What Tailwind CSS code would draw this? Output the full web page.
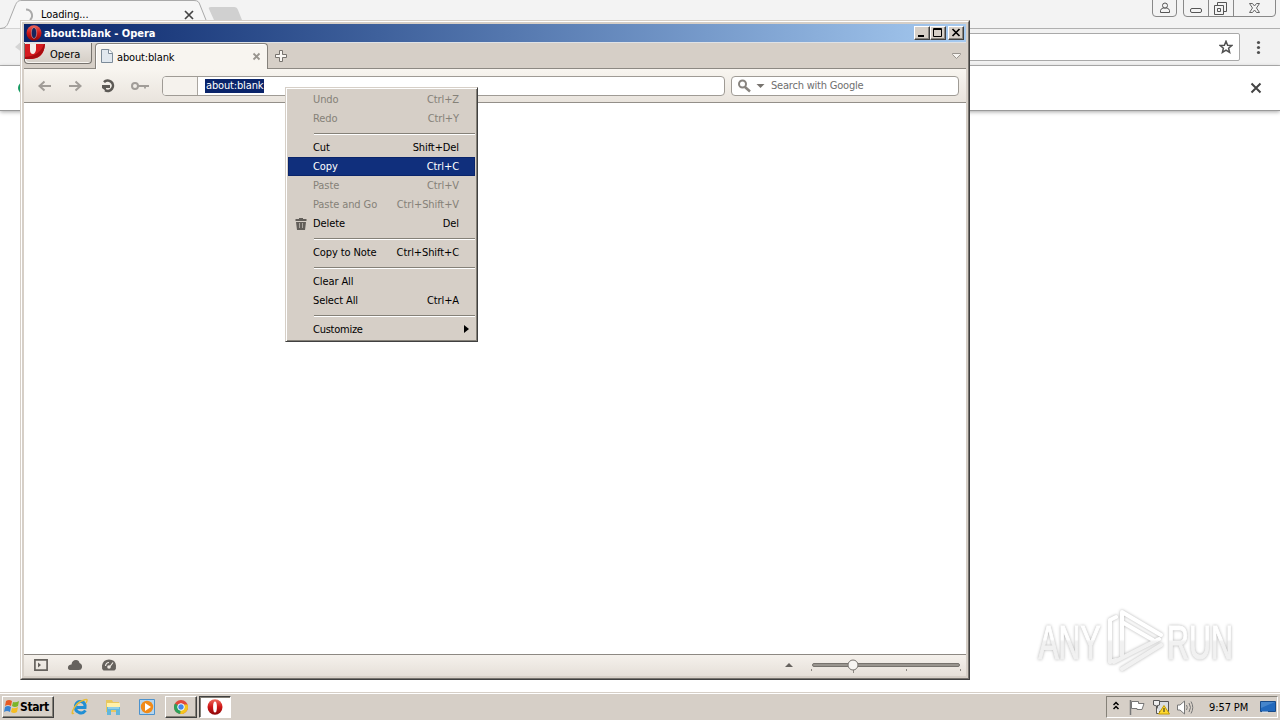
<!DOCTYPE html>
<html lang="en">
<head>
<meta charset="utf-8">
<title>Desktop</title>
<script src="https://cdn.jsdelivr.net/npm/@tailwindcss/browser@4"></script>
</head>
<body class="relative w-[1280px] h-[720px] overflow-hidden bg-white text-black text-[11px] leading-[14px] font-['DejaVu_Sans_Condensed','DejaVu_Sans',sans-serif] [font-stretch:condensed] whitespace-nowrap">

<!-- Background browser -->
<section class="absolute inset-x-0 top-0 flex flex-col">
  <div class="relative h-[29px] bg-[#f3f3f3] border-b border-[#b0b0b0]">
    <svg class="absolute left-0 top-0" width="260" height="29" fill="none">
      <path d="M0 28.500C6 28 7 26 9 21L15 6C17 1.500 18 .5 22 .5H194C198 .5 199 2 200 5L206 20L209 28.500" fill="#f6f6f6" stroke="#a9a9a9"/>
      <path d="M211 7H234Q237 7 238 10L242 20H214L209 9Q208 7 211 7Z" fill="#d0d0d0"/>
      <path d="M26 9.500A6 6 0 0 1 30 20" stroke="#aaa" stroke-width="2"/>
      <path d="M185 11L193 19M193 11L185 19" stroke="#444" stroke-width="1.700"/>
    </svg>
    <span class="absolute left-[41px] top-[8px] tracking-[-0.1px]">Loading...</span>
    <svg class="absolute left-[1150px] top-0" width="130" height="20" fill="none" stroke="#888">
      <path d="M2.500 0V13Q2.500 16.500 6 16.500H23Q26.500 16.500 26.500 13V0" />
      <path d="M33.500 0V13Q33.500 16.500 37 16.500H122Q125.500 16.500 125.500 13V0M58.500 0V16M83.500 0V16" />
      <path d="M10.500 12.500V10.500Q11 8.500 13 8H17Q19 8.500 19.500 10.500V12.500Z" stroke="#555"/><circle cx="15" cy="5.500" r="2.500" fill="#f3f3f3" stroke="#555"/>
      <rect x="40.500" y="8.500" width="11" height="4" rx="1.500" stroke="#555"/>
      <path d="M67.500 5V2.500H76.500V11.500H74M64.500 5.500H73.500V14.500H64.500ZM67.500 8.500H70.500V11.500H67.500Z" stroke="#555"/>
      <path d="M99.500 3.500H102.500L104.500 6L106.500 3.500H109.500L106.500 8L109.500 12.500H106.500L104.500 10L102.500 12.500H99.500L102.500 8Z" stroke="#666"/>
    </svg>
  </div>
  <div class="h-[37px] bg-[#f2f2f2] border-b border-[#b4b4b4] flex items-start pt-1">
    <svg class="mt-1 ml-3" width="12" height="18"><path d="M11 3L3 10L11 16Z" fill="#d5d5d5"/></svg>
    <div class="ml-[36px] w-[1180px] h-[28px] bg-white border border-[#a9a9a9] rounded-[2px] flex justify-end items-center pr-[6px]">
      <svg width="14" height="14" viewBox="0 0 14 14" fill="none" stroke="#505050" stroke-width="1.500"><path d="M7 1.300L8.600 5.200L12.800 5.500L9.600 8.200L10.600 12.400L7 10.100L3.400 12.400L4.400 8.200L1.200 5.500L5.400 5.200Z"/></svg>
    </div>
    <svg class="ml-[16px] mt-[7px]" width="5" height="16" fill="#505050"><circle cx="2.500" cy="2.500" r="1.600"/><circle cx="2.500" cy="7.500" r="1.600"/><circle cx="2.500" cy="12.500" r="1.600"/></svg>
  </div>
  <div class="h-[45px] bg-white border-b border-[#999] shadow-[0_1px_4px_rgba(0,0,0,.35)] flex items-center justify-between">
    <i class="block ml-[18px] size-3 rounded-full bg-[#169b62]"></i>
    <svg class="mr-[18px]" width="12" height="12"><path d="M1.500 1.500L10.500 10.500M10.500 1.500L1.500 10.500" stroke="#444" stroke-width="2"/></svg>
  </div>
</section>

<!-- Watermark -->
<svg class="absolute left-[1030px] top-[600px]" width="250" height="80">
  <defs><linearGradient id="w" gradientUnits="userSpaceOnUse" x1="0" y1="20" x2="0" y2="62"><stop offset=".46" stop-color="#fff"/><stop offset=".52" stop-color="#f1f1f1"/></linearGradient></defs>
  <g style="filter:drop-shadow(0 0 1.500px rgba(0,0,0,.3))">
    <g fill="url(#w)" stroke="url(#w)" stroke-width="1.200" font-family="Liberation Sans Narrow, Liberation Sans, sans-serif" font-size="49">
      <text x="8.500" y="58.500" textLength="62" lengthAdjust="spacingAndGlyphs">ANY</text>
      <text x="137" y="58.500" textLength="66" lengthAdjust="spacingAndGlyphs">RUN</text>
    </g>
    <g fill="none" stroke="url(#w)" stroke-width="4" stroke-linejoin="round" stroke-linecap="round">
      <path d="M92 56V12L131 35M80 62V20L86 17M84 62L129 39M92 69L131 45M80 62L86 60M92 22L123 40"/>
    </g>
  </g>
</svg>

<!-- Opera window -->
<section class="absolute left-[20px] top-[20px] w-[950px] h-[660px] bg-[#d6cfc7] border border-t-[#d6cfc7] border-l-[#d6cfc7] border-r-[#404040] border-b-[#404040] flex flex-col">
 <div class="flex-1 flex flex-col border-t border-l border-t-white border-l-white border-r border-b border-r-[#77736e] border-b-[#77736e] pt-[2px] pl-[2px] pr-[2px] pb-[2px] min-h-0">
  <header class="h-[18px] shrink-0 bg-linear-to-r from-[#0a246a] to-[#a6caf0] flex items-center pl-[2px] pr-[2px] text-white font-bold">
    <svg width="16" height="16"><defs><linearGradient id="r" x2="0" y2="1"><stop stop-color="#f06a5c"/><stop offset=".5" stop-color="#ce1515"/><stop offset="1" stop-color="#8b0808"/></linearGradient></defs><ellipse cx="8" cy="8" rx="7.500" ry="7.800" fill="url(#r)"/><ellipse cx="8" cy="8" rx="2.700" ry="5.500" fill="#15245c" stroke="#f5b0a5" stroke-width=".5"/></svg>
    <span class="ml-[2px] mt-px tracking-[-0.02px]">about:blank - Opera</span>
    <div class="ml-auto flex">
      <b class="w-4 h-[14px] bg-[#d6cfc7] border border-t-white border-l-white border-r-[#404040] border-b-[#404040] shadow-[inset_-1px_-1px_#8a8680]"><svg width="14" height="12"><path d="M3 9H9" stroke="#000" stroke-width="2"/></svg></b>
      <b class="w-4 h-[14px] bg-[#d6cfc7] border border-t-white border-l-white border-r-[#404040] border-b-[#404040] shadow-[inset_-1px_-1px_#8a8680]"><svg width="14" height="12" fill="none" stroke="#000"><path d="M2.500 1.500H10.500V9.500H2.500ZM2.500 2.500H10.500"/></svg></b>
      <b class="ml-[2px] w-4 h-[14px] bg-[#d6cfc7] border border-t-white border-l-white border-r-[#404040] border-b-[#404040] shadow-[inset_-1px_-1px_#8a8680]"><svg width="14" height="12"><path d="M3.500 2L10.500 9M10.500 2L3.500 9" stroke="#000" stroke-width="1.700"/></svg></b>
    </div>
  </header>
  <nav class="h-[27px] shrink-0 bg-[#d6cfc7] flex items-start border-b border-[#8d8983] border-t border-t-[#dfe2e6]">
    <div class="w-[68px] h-[21px] border border-t-0 border-[#77736e] rounded-b-[4px] bg-linear-to-b from-[#e9e5e0] to-[#d4cec6] flex items-center overflow-hidden shadow-[inset_1px_-1px_#f8f5f1]">
      <svg class="self-start" width="22" height="18"><path d="M0 1H20Q19 15 7 16H0Z" fill="#d51c20"/><path d="M0 14Q15 13 19 1H20Q19 16 4 16H0Z" fill="#a80c10"/><path d="M5 1H11V7Q10 11 8 11Q5 11 5 7Z" fill="#f3efeb"/></svg>
      <span class="ml-[3px] mt-[3px]">Opera</span>
    </div>
    <div class="ml-[3px] -mb-px w-[173px] h-[26px] bg-[#f8f5f0] border border-b-0 border-[#85817b] rounded-t-[4px] flex items-center pl-[5px] pr-[6px] shadow-[inset_1px_1px_#fff]">
      <svg class="-mt-[2px]" width="12" height="14" fill="none" stroke="#7c8b99"><path d="M.5 .5H8L11.500 4V13.500H.5Z" fill="#e1e8ef"/><path d="M7.500 .5V4.500H11.500" fill="#fff"/></svg>
      <span class="ml-[4px] mt-[2px] tracking-[-0.15px]">about:blank</span>
      <svg class="ml-auto -mt-px" width="9" height="9"><path d="M1.500 1.500L7.500 7.500M7.500 1.500L1.500 7.500" stroke="#99958f" stroke-width="1.800"/></svg>
    </div>
    <svg class="ml-[6px] mt-[6px]" width="14" height="14"><path d="M5.500 1.500H8.500V5.500H12.500V8.500H8.500V12.500H5.500V8.500H1.500V5.500H5.500Z" fill="#faf7f3" stroke="#77736e"/></svg>
    <svg class="ml-auto mr-[4px] mt-[9px]" width="11" height="8"><path d="M1.500 1.500H9.500V2.500L5.500 6.500L1.500 2.500Z" fill="#f5f2ee" stroke="#99948e"/></svg>
  </nav>
  <div class="h-[34px] shrink-0 bg-linear-to-b from-[#f8f5f0] to-[#e9e4dd] border-b border-[#938f89] flex items-center pl-[13px] pr-[7px]">
    <svg width="126" height="18" fill="none" stroke="#a19d98" stroke-width="2">
      <path d="M14 9H3M7.500 4.500L2.500 9L7.500 13.500M32 9H43M38.500 4.500L43.500 9L38.500 13.500"/>
      <path d="M67 5.200A5.200 5.200 0 1 1 68 13.200" stroke="#5c5955" stroke-width="2.600"/><path d="M65 8H73V11H69V14L65 11Z" fill="#5c5955" stroke="none"/>
      <circle cx="98" cy="9" r="3"/><path d="M101 9H112M108 9V11.500" stroke-width="1.800"/>
    </svg>
    <div class="w-[563px] h-[20px] -ml-px mt-px rounded-[4px] bg-white border border-[#9f9b95] flex items-center overflow-hidden">
      <i class="w-[35px] h-full bg-[#f5f2ed] border-r border-[#aaa6a0]"></i>
      <span class="ml-[7px] h-[14px] w-[59px] pl-px bg-[#0a246a] text-white tracking-[-0.15px]">about:blank</span>
    </div>
    <div class="ml-[6px] w-[228px] h-[20px] mt-px rounded-[4px] bg-white border border-[#9f9b95] flex items-center text-[#6f6f6f]">
      <svg class="ml-[6px]" width="28" height="14" fill="none" stroke="#88847f" stroke-width="2"><circle cx="4.500" cy="5" r="3.500"/><path d="M7 8L12 12.500" stroke-width="2.500"/><path d="M18.500 5H26.500L22.500 9Z" fill="#77736e" stroke="none"/></svg>
      <span class="ml-[5px] tracking-[-0.21px]">Search with Google</span>
    </div>
  </div>
  <main class="flex-1 bg-white"></main>
  <footer class="h-[22px] shrink-0 bg-linear-to-b from-[#f5f1ec] to-[#e6e0d9] border-t border-[#8d8983] flex items-start">
    <svg class="ml-[9px] mt-px" width="90" height="18" fill="#66625e">
      <path d="M1.900 3.900H14.100V14.100H1.900Z" fill="none" stroke="#66625e" stroke-width="1.700"/><path d="M5 6.500L8 9L5 11.500Z"/>
      <path d="M37 14Q34.500 13.500 35 11Q35.500 8.500 38.500 8.500Q39 4 43 4Q46 4 46.500 7Q49.500 8 49 11.500Q48.500 14 46 14Z"/>
      <path d="M70.500 14.500Q68.500 13 69 9.500Q70 3.500 76 3.500Q82.500 3.500 83 9.500Q83.500 13 81.500 14.500Z"/><path d="M72.500 10Q73 6.500 76 6.500M80 6.500L77 10.500" stroke="#eee9e3" fill="none" stroke-width="1.200"/><circle cx="76" cy="11" r="1.800" fill="#eee9e3"/>
    </svg>
    <svg class="ml-auto mr-[3px]" width="180" height="20" fill="#66625e">
      <path d="M2 12L6 8L10 12Z"/><rect x="29.500" y="8.500" width="147" height="3" rx="1.500" fill="#99958f" stroke="#77736e"/>
      <path d="M28.500 14V16M70.500 15V18M123.500 14V16M177.500 14V16" stroke="#8d8983"/><circle cx="70" cy="10" r="5" fill="#f7f5f2" stroke="#77736e"/>
    </svg>
  </footer>
 </div>
</section>

<!-- Context menu -->
<ul class="absolute left-[285px] top-[87px] w-[193px] h-[255px] bg-[#d6cfc7] border border-t-[#d6cfc7] border-l-[#d6cfc7] border-r-[#404040] border-b-[#404040] shadow-[inset_1px_1px_#fff,inset_-1px_-1px_#858178] p-[2px] flex flex-col tracking-[-0.1px] [&>li]:h-[19px] [&>li]:shrink-0 [&>li]:flex [&>li]:items-center [&>li]:justify-between [&>li]:pl-[25px] [&>li]:pr-[16px] [&>hr]:mt-[5px] [&>hr]:mb-[3px] [&>hr]:ml-[26px] [&>hr]:h-[2px] [&>hr]:shrink-0 [&>hr]:border-0 [&>hr]:border-t [&>hr]:border-[#858178] [&>hr]:bg-white">
  <li class="text-[#858178]"><span>Undo</span><span>Ctrl+Z</span></li>
  <li class="text-[#858178]"><span>Redo</span><span>Ctrl+Y</span></li>
  <hr>
  <li><span>Cut</span><span>Shift+Del</span></li>
  <li class="bg-[#102f7c] border border-[#0a246a] text-white !pl-[24px] !pr-[15px]"><span>Copy</span><span>Ctrl+C</span></li>
  <li class="text-[#858178]"><span>Paste</span><span>Ctrl+V</span></li>
  <li class="text-[#858178]"><span>Paste and Go</span><span>Ctrl+Shift+V</span></li>
  <li class="!pl-[7px]"><svg width="12" height="13" fill="#625e59"><path d="M0.500 2H4V1H8V2H11.500V4H.5ZM1 5H11L10 13H2Z"/><path d="M4.500 6V11M7.500 6V11" stroke="#aaa59e"/></svg><span class="ml-[6px] mr-auto">Delete</span><span>Del</span></li>
  <hr>
  <li><span>Copy to Note</span><span>Ctrl+Shift+C</span></li>
  <hr>
  <li><span>Clear All</span></li>
  <li><span>Select All</span><span>Ctrl+A</span></li>
  <hr>
  <li class="!pr-[6px]"><span class="tracking-[-0.25px]">Customize</span><svg class="-mt-[2px]" width="5" height="8"><path d="M0 0L5 4L0 8Z"/></svg></li>
</ul>

<!-- Taskbar -->
<footer class="absolute inset-x-0 bottom-0 h-[28px] bg-[#d6cfc7] border-t border-[#d6cfc7] shadow-[inset_0_1px_#fff] flex items-center pt-[1px] pl-[2px]">
  <div class="w-[52px] h-[22px] border border-t-white border-l-white border-r-[#404040] border-b-[#404040] shadow-[inset_-1px_-1px_#858178] flex items-center pl-[1px] font-bold text-[12px]">
    <svg width="16" height="16"><path d="M2 2Q5 0 8 2L7 7Q4 5 1 7Z" fill="#e85a24"/><path d="M9 3Q12 4 15 2L14 7Q11 9 8 7Z" fill="#7bb52b"/><path d="M1 8Q4 6 7 8L6 13Q3 11 0 13Z" fill="#3a83d2"/><path d="M8 9Q11 10 14 8L13 13Q10 15 7 13Z" fill="#f6bd22"/></svg>
    <span class="tracking-[-0.4px]">Start</span>
  </div>
  <svg class="ml-[17px]" width="18" height="18" fill="none"><path d="M14.500 12.500Q12 16 8 14.500Q3.500 12.500 4.500 7.500Q6 3 10 3.500Q14.500 4 14 9.500H6" stroke="#218fd4" stroke-width="3"/><path d="M3 15Q0 17 2 12Q6 4 13 2Q18 0 15 5" stroke="#e8bc34" stroke-width="1.500"/></svg>
  <svg class="ml-[16px]" width="17" height="18"><path d="M1 2H7L8 4H14V14H1Z" fill="#e8c85f"/><path d="M2 5H15V9H2Z" fill="#fff1a9"/><path d="M2 9H15V17H11V12H6V17H2Z" fill="#62b7dc"/><path d="M3 10H14" stroke="#b9e5f5"/></svg>
  <svg class="ml-[17px]" width="17" height="17"><path d="M.5 .5H15.500V15.500H.5Z" fill="#b5d5ee" stroke="#4c92cd"/><circle cx="8" cy="8" r="6.200" fill="#f18a18"/><path d="M6 4L12 8L6 12Z" fill="#fff"/></svg>
  <div class="ml-[9px] w-[32px] h-[22px] border border-t-white border-l-white border-r-[#404040] border-b-[#404040] shadow-[inset_-1px_-1px_#858178] flex items-center justify-center"><svg width="16" height="16" viewBox="0 0 16 16"><circle cx="8" cy="8" r="7" fill="#e1493b"/><path d="M8 8L2 4.400A7 7 0 0 0 7.200 15L11 9.500Z" fill="#2ca15a"/><path d="M8 8L7.200 15A7 7 0 0 0 14.500 5.500H8Z" fill="#f5c51d"/><circle cx="8" cy="8" r="3.300" fill="#4487e9" stroke="#fff"/></svg></div>
  <div class="ml-[2px] w-[32px] h-[22px] bg-white border border-t-[#404040] border-l-[#404040] border-r-white border-b-white shadow-[inset_1px_1px_#858178] flex items-center justify-center"><svg width="16" height="16"><ellipse cx="8" cy="8" rx="7.500" ry="7.800" fill="url(#r)"/><ellipse cx="8" cy="8" rx="1.900" ry="5.500" fill="#fff"/></svg></div>
  <div class="ml-auto mr-[2px] w-[172px] h-[22px] border border-t-[#858178] border-l-[#858178] border-r-white border-b-white flex items-center">
    <svg class="ml-[6px]" width="82" height="18" fill="none" stroke="#777">
      <path d="M.500 7L3 4.500L5.500 7M.500 11L3 8.500L5.500 11" stroke="#000" stroke-width="1.500"/>
      <path d="M17.500 2V17" stroke-width="1.500"/><path d="M18.500 3.500H25.500V5.500H31L29 11.500H24V10.500H18.500Z" fill="#fff"/>
      <path d="M44.500 3.500H55.500V13.500H44.500Z" fill="#d9dde0" stroke="#555"/><path d="M40.500 2.500H46.500V7Q43.500 9 40.500 7ZM43.500 8V15.500H47" fill="#eee" stroke="#555"/><path d="M51 7.500L56.500 16H45.500Z" fill="#ffd92e" stroke="#c39b00"/><path d="M51 10V14" stroke="#222"/>
      <path d="M64.500 7H67L71.500 3V16L67 12H64.500Z" fill="#fff"/><path d="M73.500 7Q75 9.500 73.500 12M76 5Q79 9.500 76 14M78 3.500Q81.500 9.500 78 15.500"/>
    </svg>
    <span class="ml-[14px] mt-px tracking-[-0.1px]">9:57 PM</span>
    <svg class="ml-auto mr-[1px]" width="16" height="14"><path d="M.5 1.500H15.500V11.500H.5Z" fill="#2269bd" stroke="#174a89"/><path d="M1 2H15L1 8Z" fill="#4585cc"/><path d="M2 12H8" stroke="#dfefff"/></svg>
  </div>
</footer>
</body>
</html>
